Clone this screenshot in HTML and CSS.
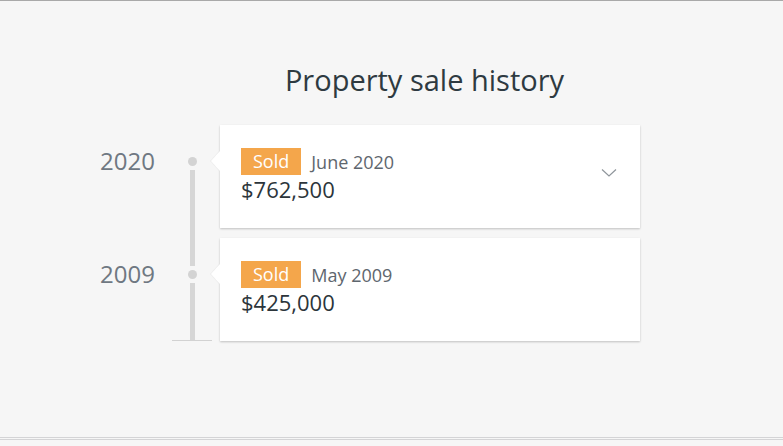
FILE: index.html
```html
<!DOCTYPE html>
<html lang="en">
<head>
<meta charset="utf-8">
<title>Property sale history</title>
<link rel="stylesheet" href="styles.css">
</head>
<body>
<div class="page">
  <main class="main">
    <h2 class="title">Property sale history</h2>
    <div class="timeline">
      <div class="row first">
        <div class="year">2020</div>
        <div class="track">
          <span class="spacer"></span>
          <span class="dot"></span>
          <span class="line"></span>
        </div>
        <div class="cell">
          <div class="card">
            <div class="info">
              <div class="meta"><span class="badge">Sold</span><span class="date">June 2020</span></div>
              <div class="price">$762,500</div>
            </div>
            <svg class="chevron" width="16" height="10" viewBox="0 0 16 10"><path d="M1 1.5 L8 8 L15 1.5" fill="none" stroke="#8f959b" stroke-width="1.2"/></svg>
          </div>
        </div>
      </div>
      <div class="row last">
        <div class="year">2009</div>
        <div class="track">
          <span class="line top"></span>
          <span class="dot"></span>
          <span class="line"></span>
        </div>
        <div class="cell">
          <div class="card">
            <div class="info">
              <div class="meta"><span class="badge">Sold</span><span class="date">May 2009</span></div>
              <div class="price">$425,000</div>
            </div>
          </div>
        </div>
      </div>
    </div>
  </main>
  <footer class="footer"><div class="footer-inner"></div></footer>
</div>
</body>
</html>
```
FILE: styles.css
```css
html, body {
  margin: 0;
  padding: 0;
}
body {
  background: #f6f6f6;
  font-family: "Open Sans", Lato, sans-serif;
  border-top: 1px solid #a9a9a9;
}
.page {
  height: 445px;
  display: flex;
  flex-direction: column;
}
.main {
  flex: 1;
}
.title {
  margin: 62px 0 0;
  padding-left: 66px;
  text-align: center;
  font-size: 29px;
  line-height: 34px;
  font-weight: 400;
  color: #2e3a41;
}
.timeline {
  margin-top: 28px;
  padding-left: 100px;
}
.row {
  display: flex;
}
.year {
  width: 72px;
  margin-top: 23px;
  font-size: 24px;
  line-height: 26px;
  color: #6f7882;
}
.track {
  width: 40px;
  display: flex;
  flex-direction: column;
  align-items: center;
}
.row.last .track {
  border-bottom: 1px solid #d2d2d2;
}
.spacer {
  height: 32px;
}
.dot {
  width: 9px;
  height: 9px;
  border-radius: 50%;
  background: #d3d3d3;
  flex: none;
}
.line {
  width: 5px;
  background: #d6d6d6;
  flex: 1;
  margin-top: 4px;
}
.line.top {
  flex: none;
  height: 28px;
  margin-top: 0;
  margin-bottom: 4px;
}
.cell {
  padding-left: 8px;
}
.row.first .cell {
  padding-bottom: 10px;
}
.card {
  position: relative;
  width: 378px;
  height: 57px;
  padding: 23px 21px;
  background: #fff;
  box-shadow: 0 1px 2px rgba(0, 0, 0, 0.22);
  display: flex;
}
.card::before {
  content: "";
  position: absolute;
  left: -9px;
  top: 26px;
  width: 0;
  height: 0;
  border-top: 10px solid transparent;
  border-bottom: 10px solid transparent;
  border-right: 9px solid #fff;
  filter: drop-shadow(-1px 0 0 rgba(0,0,0,0.04));
}
.info {
  flex: 1;
}
.meta {
  display: flex;
  align-items: center;
}
.badge {
  background: #f4a64b;
  color: #fff;
  font-size: 18px;
  line-height: 27px;
  height: 27px;
  padding: 0 12px;
}
.date {
  margin-left: 10px;
  font-size: 18px;
  color: #5e666e;
}
.price {
  margin-top: 0;
  font-size: 22px;
  line-height: 28px;
  color: #2c353b;
}
.chevron {
  margin-top: 20px;
  margin-right: 2px;
}
.footer {
  border-top: 1px solid #d4d4d6;
  padding-top: 1px;
  box-sizing: border-box;
  height: 9px;
}
.footer-inner {
  border-top: 1px solid #d4d4d6;
}
```
